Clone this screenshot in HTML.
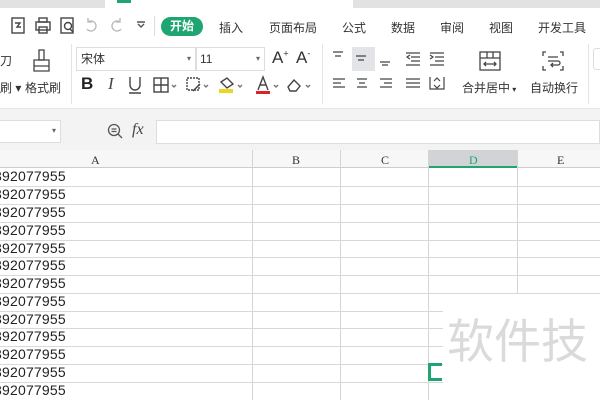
<!DOCTYPE html>
<html><head><meta charset="utf-8"><style>
*{margin:0;padding:0;box-sizing:border-box}
body{width:600px;height:400px;overflow:hidden;background:#fff;position:relative;font-family:"Liberation Sans","Noto Sans CJK SC",sans-serif;color:#333}
.a{position:absolute}
.t{font-size:12px;white-space:nowrap}
.hl{position:absolute;left:0;width:443px;height:1px;background:#d8d8d8}
.vl{position:absolute;width:1px;background:#d4d4d4}
.num{position:absolute;left:-6px;font-size:14px;color:#222;font-family:"Liberation Sans",sans-serif;letter-spacing:0.2px}
.ch{position:absolute;top:153px;font-size:12px;font-family:"Liberation Serif",serif;color:#333}
</style></head><body>
<div class="a" style="left:0;top:0;width:105px;height:8px;background:#e2e2e2"></div>
<div class="a" style="left:353px;top:0;width:247px;height:8px;background:#e2e2e2"></div>
<div class="a" style="left:117px;top:0;width:14px;height:3px;background:#1fa572"></div>
<svg class="a" style="left:0;top:14px" width="150" height="24" fill="none" stroke="#444" stroke-width="1.4">
<rect x="12" y="4" width="12" height="15"/><path d="M15 9h5l-3 4h4"/>
<rect x="36" y="8" width="14" height="8"/><rect x="39" y="4" width="8" height="4"/><rect x="39" y="13" width="8" height="6"/>
<rect x="61" y="4" width="12" height="15"/><circle cx="68" cy="12" r="3.5"/><path d="M70 15l3 3"/>
<path d="M88 8a5 5 0 1 1-1 7M88 4v4h4" stroke="#bbb"/>
<path d="M120 8a5 5 0 1 0 1 7M120 4v4h-4" stroke="#bbb"/>
<path d="M138 10l3 3 3-3M137 8h8" stroke="#555"/>
</svg>
<div class="a" style="left:154px;top:16px;width:1px;height:20px;background:#ddd"></div>
<div class="a t" style="left:161px;top:17px;width:42px;height:19px;border-radius:10px;background:#1fa572;color:#fff;text-align:center;line-height:19px;font-weight:bold">开始</div>
<div class="a t" style="left:219px;top:19px">插入</div>
<div class="a t" style="left:269px;top:19px">页面布局</div>
<div class="a t" style="left:342px;top:19px">公式</div>
<div class="a t" style="left:391px;top:19px">数据</div>
<div class="a t" style="left:440px;top:19px">审阅</div>
<div class="a t" style="left:489px;top:19px">视图</div>
<div class="a t" style="left:538px;top:19px">开发工具</div>
<div class="a t" style="left:0;top:52px">刀</div>
<div class="a t" style="left:0;top:79px">刷 ▾</div>
<svg class="a" style="left:30px;top:48px" width="24" height="26" fill="none" stroke="#444" stroke-width="1.3"><rect x="9" y="2" width="5" height="10"/><path d="M4 12h15v11H4zM4 18h15"/></svg>
<div class="a t" style="left:25px;top:79px">格式刷</div>
<div class="a" style="left:71px;top:44px;width:1px;height:60px;background:#e4e4e4"></div>
<div class="a t" style="left:76px;top:47px;width:120px;height:24px;border:1px solid #ddd;line-height:22px;padding-left:4px;font-size:12px">宋体<span style="position:absolute;right:4px;font-size:8px;color:#666">▾</span></div>
<div class="a t" style="left:196px;top:47px;width:69px;height:24px;border:1px solid #ddd;line-height:22px;padding-left:3px">11<span style="position:absolute;right:4px;font-size:8px;color:#666">▾</span></div>
<div class="a" style="left:272px;top:48px;font-size:17px;color:#333">A<sup style="font-size:9px">+</sup></div>
<div class="a" style="left:296px;top:48px;font-size:17px;color:#333">A<sup style="font-size:9px">-</sup></div>
<div class="a" style="left:81px;top:74px;font-size:17px;font-weight:bold;color:#222">B</div>
<div class="a" style="left:108px;top:74px;font-size:17px;font-style:italic;color:#444;font-family:'Liberation Serif',serif">I</div>
<svg class="a" style="left:125px;top:74px" width="200" height="22" fill="none" stroke="#444" stroke-width="1.4">
<path d="M5 3v8a5 5 0 0 0 10 0V3M4 19h12"/>
<rect x="29" y="4" width="14" height="14"/><path d="M36 4v14M29 11h14"/><path d="M47 11l2 2 2-2" stroke="#777"/>
<rect x="62" y="4" width="12" height="12" stroke-dasharray="2 1"/><path d="M68 17l7-7" /><path d="M79 11l2 2 2-2" stroke="#777"/>
<path d="M96 8l6-4 6 6-6 4z"/><rect x="94" y="15" width="14" height="4" fill="#e8d820" stroke="none"/><path d="M113 11l2 2 2-2" stroke="#777"/>
<path d="M133 16l5-13 5 13M135 11h6"/><rect x="131" y="17" width="14" height="3" fill="#d9252a" stroke="none"/><path d="M149 11l2 2 2-2" stroke="#777"/>
<path d="M163 13l6-7 6 6-4 5h-6z"/><path d="M181 11l2 2 2-2" stroke="#777"/>
</svg>
<div class="a" style="left:322px;top:44px;width:1px;height:60px;background:#e4e4e4"></div>
<div class="a" style="left:352px;top:47px;width:23px;height:24px;background:#e2e4e7"></div>
<svg class="a" style="left:330px;top:47px" width="120" height="50" fill="none" stroke="#444" stroke-width="1.2">
<path d="M3 5h10M5 9h6M26 9h10M28 13h6M50 15h10M52 18h6"/>
<path d="M76 6h14M81 10h9M81 14h9M76 18h14M80 8l-3 2 3 2"/>
<path d="M100 6h14M105 10h9M105 14h9M100 18h14M100 8l3 2-3 2"/>
<path d="M3 32h12M3 36h8M3 40h12M27 32h10M29 36h6M27 40h10M50 32h12M54 36h8M50 40h12M76 32h14M76 36h14M76 40h14"/>
<path d="M100 30v12h14V30M104 34l3-3 3 3M104 38l3 3 3-3"/>
</svg>
<svg class="a" style="left:478px;top:50px" width="24" height="22" fill="none" stroke="#444" stroke-width="1.3"><rect x="2" y="2" width="20" height="18"/><path d="M2 8h20M9 2v6M15 2v6M6 14h12M8 12l-2 2 2 2M16 12l2 2-2 2"/></svg>
<div class="a t" style="left:462px;top:79px">合并居中<span style="font-size:8px"> ▾</span></div>
<svg class="a" style="left:541px;top:50px" width="24" height="22" fill="none" stroke="#444" stroke-width="1.3"><path d="M5 2H2v4M19 2h3v4M5 20H2v-4M19 20h3v-4M7 7h10M7 11h10a2 2 0 0 1 0 4h-6M12 13l-2 2 2 2"/></svg>
<div class="a t" style="left:530px;top:79px">自动换行</div>
<div class="a" style="left:588px;top:44px;width:1px;height:60px;background:#e4e4e4"></div>
<div class="a" style="left:593px;top:48px;width:10px;height:22px;border:1px solid #ddd;border-radius:3px"></div>
<div class="a" style="left:0;top:108px;width:600px;height:42px;background:#f3f3f3;border-top:1px solid #e6e6e6"></div>
<div class="a" style="left:0;top:120px;width:61px;height:23px;background:#fff;border:1px solid #ddd;border-left:none"><span style="position:absolute;right:4px;top:5px;font-size:8px;color:#666">▾</span></div>
<svg class="a" style="left:106px;top:122px" width="18" height="18" fill="none" stroke="#555" stroke-width="1.3"><circle cx="8" cy="8" r="5.5"/><path d="M5.5 7h5M5.5 9.5h5M12 12l4 4"/></svg>
<div class="a" style="left:132px;top:121px;font-size:16px;font-style:italic;font-family:'Liberation Serif',serif;color:#444">fx</div>
<div class="a" style="left:156px;top:120px;width:444px;height:24px;background:#fff;border:1px solid #ddd"></div>
<div class="a" style="left:0;top:150px;width:600px;height:18px;background:#f7f7f7;border-bottom:1px solid #ccc"></div>
<div class="a" style="left:428px;top:150px;width:90px;height:18px;background:#d2d3d6;border-bottom:2px solid #1fa572"></div>
<div class="ch" style="left:91px">A</div>
<div class="ch" style="left:292px">B</div>
<div class="ch" style="left:381px">C</div>
<div class="ch" style="left:469px;color:#1fa572">D</div>
<div class="ch" style="left:557px">E</div>
<div class="vl" style="left:252px;top:150px;height:250px"></div>
<div class="vl" style="left:340px;top:150px;height:250px"></div>
<div class="vl" style="left:428px;top:150px;height:250px"></div>
<div class="vl" style="left:517px;top:150px;height:143px"></div>
<div class="hl" style="top:186px;width:600px"></div>
<div class="hl" style="top:204px;width:600px"></div>
<div class="hl" style="top:222px;width:600px"></div>
<div class="hl" style="top:240px;width:600px"></div>
<div class="hl" style="top:257px;width:600px"></div>
<div class="hl" style="top:275px;width:600px"></div>
<div class="hl" style="top:293px;width:600px"></div>
<div class="hl" style="top:311px"></div>
<div class="hl" style="top:328px"></div>
<div class="hl" style="top:346px"></div>
<div class="hl" style="top:364px"></div>
<div class="hl" style="top:382px"></div>
<div class="a" style="left:443px;top:294px;width:157px;height:106px;background:#fff"></div>
<div class="a" style="left:447px;top:312px;font-size:47px;color:#dadada;font-family:'Noto Sans CJK SC',sans-serif;white-space:nowrap;line-height:1.1">软件技</div>
<div class="a" style="left:428px;top:363px;width:14px;height:18px;border:3px solid #1fa572;border-right:none"></div>
<div class="num" style="top:168px">392077955</div>
<div class="num" style="top:186px">392077955</div>
<div class="num" style="top:204px">392077955</div>
<div class="num" style="top:222px">392077955</div>
<div class="num" style="top:240px">392077955</div>
<div class="num" style="top:257px">392077955</div>
<div class="num" style="top:275px">392077955</div>
<div class="num" style="top:293px">392077955</div>
<div class="num" style="top:311px">392077955</div>
<div class="num" style="top:328px">392077955</div>
<div class="num" style="top:346px">392077955</div>
<div class="num" style="top:364px">392077955</div>
<div class="num" style="top:382px">392077955</div>
</body></html>
